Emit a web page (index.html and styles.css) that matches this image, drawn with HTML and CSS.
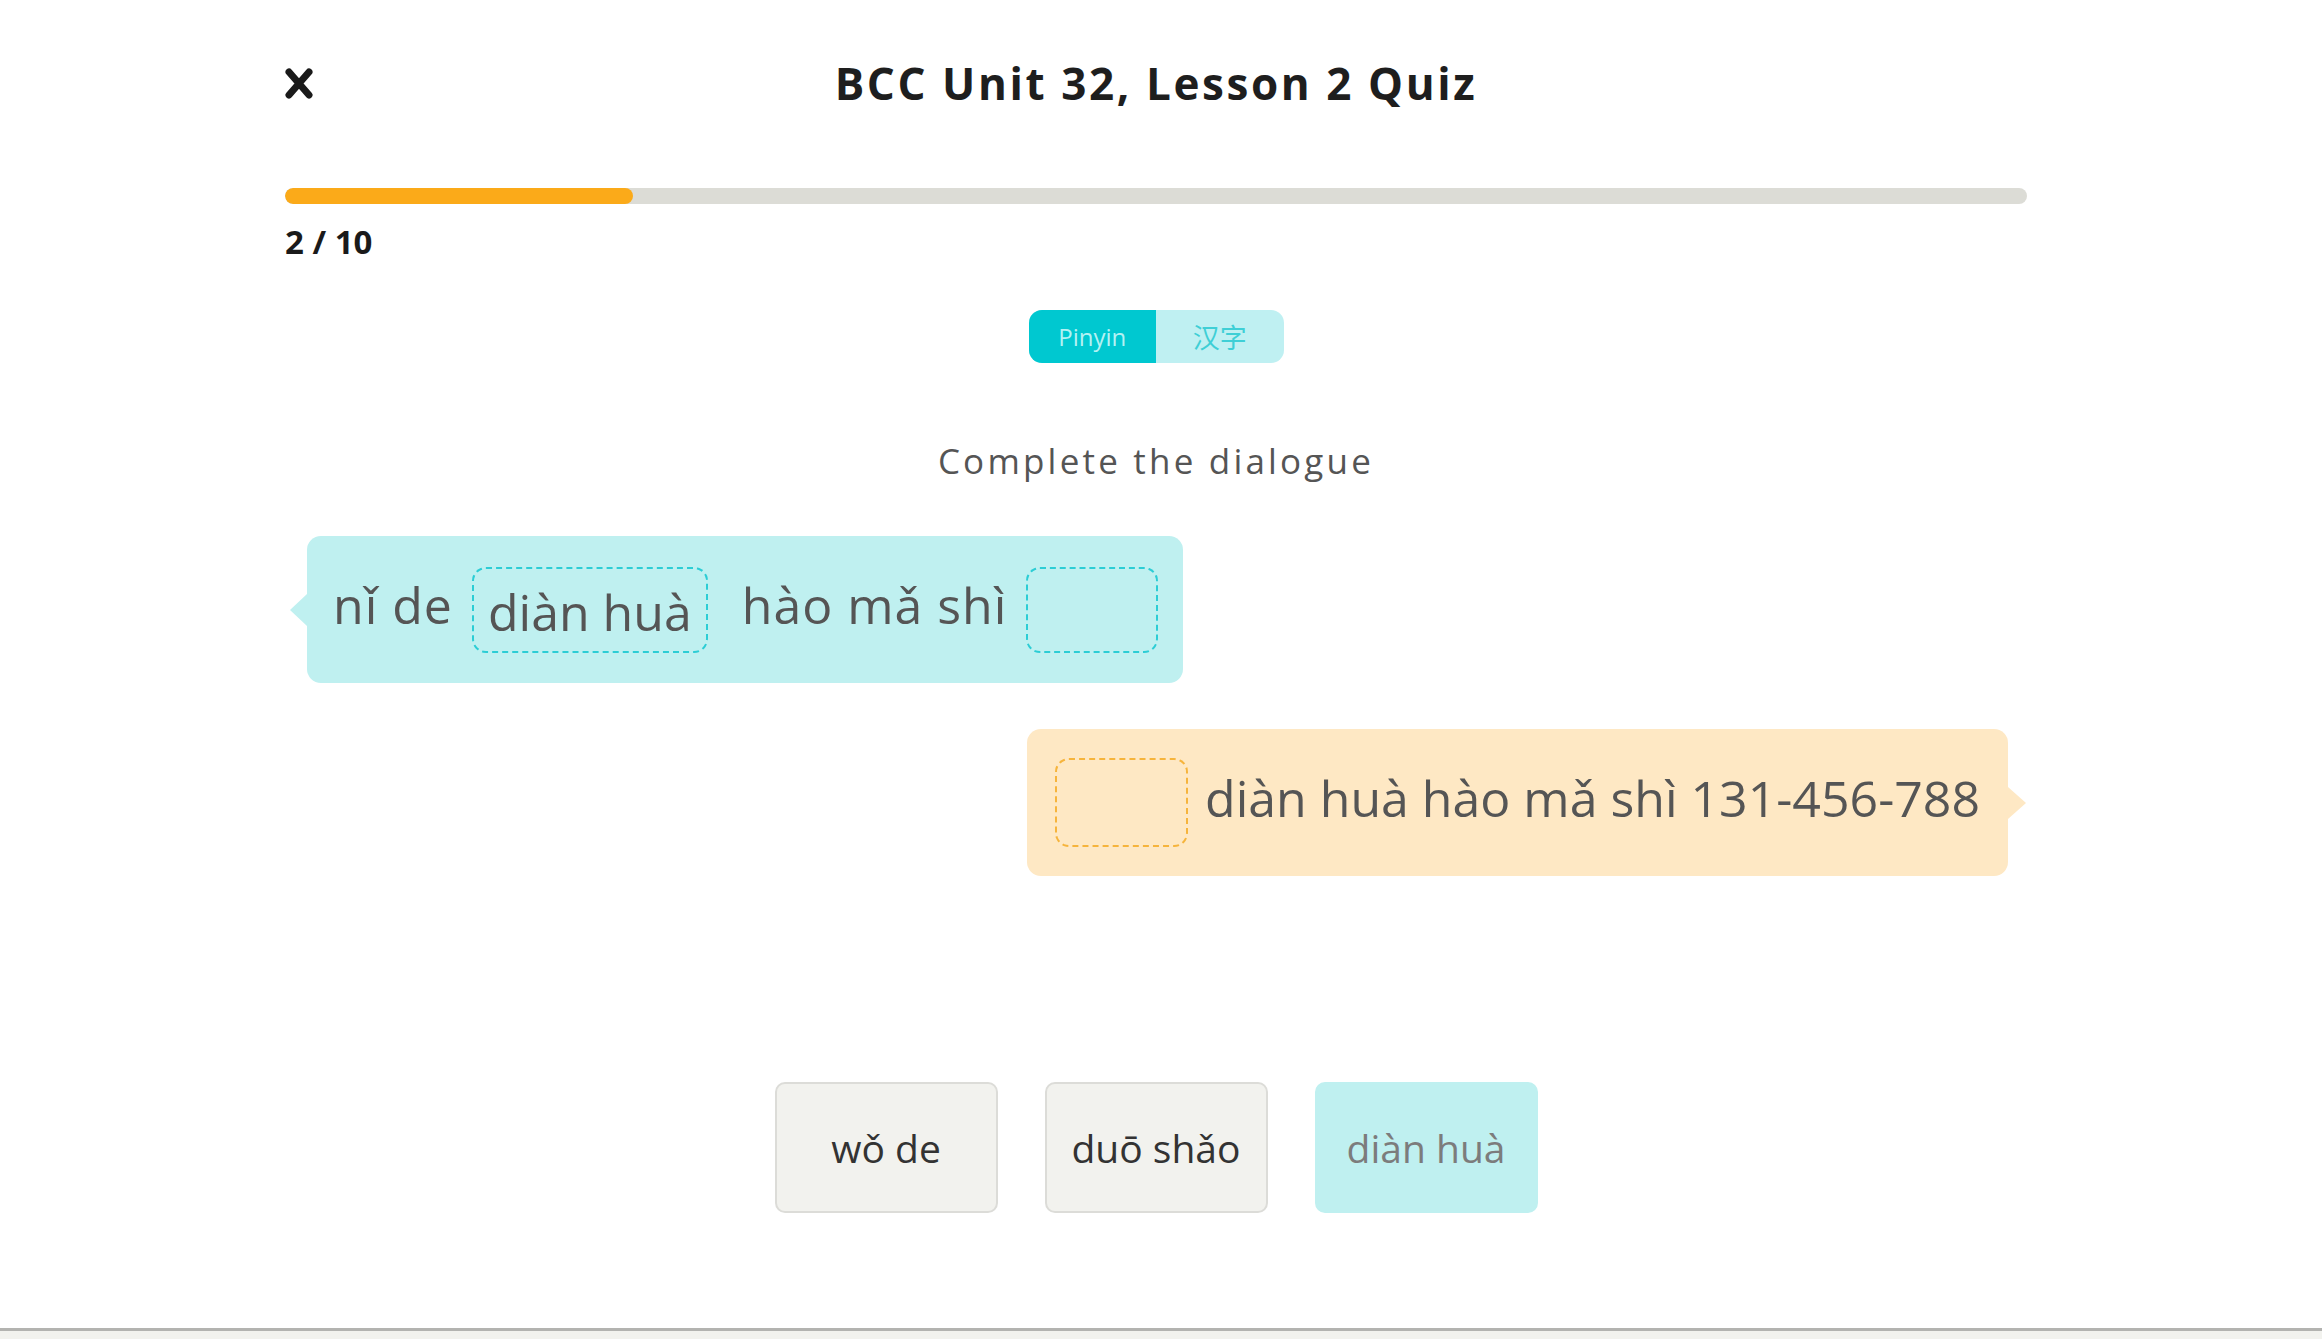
FILE: index.html
```html
<!DOCTYPE html>
<html lang="en">
<head>
    <meta charset="UTF-8">
    <title>BCC Unit 32, Lesson 2 Quiz</title>
    <link rel="stylesheet" href="styles.css">
</head>
<body>
    <div class="page">
        <div class="quiz">

            <div class="quiz-header">
                <a href="#" class="close-btn" aria-label="Close">
                    <svg width="28" height="31" viewBox="0 0 28 31">
                        <path d="M4 4 L24 27 M24 4 L4 27" stroke="#1a1a1a" stroke-width="7" stroke-linecap="round"/>
                    </svg>
                </a>
                <h1>BCC Unit 32, Lesson 2 Quiz</h1>
                <div></div>
            </div>

            <div class="progress">
                <div class="progress-fill" style="width: 20%"></div>
            </div>
            <div class="progress-count">2 / 10</div>

            <div class="script-toggle">
                <button class="toggle-btn active">Pinyin</button>
                <button class="toggle-btn hanzi">汉字</button>
            </div>

            <p class="instructions">Complete the dialogue</p>

            <div class="dialogue">
                <div class="bubble bubble-left">
                    <span class="word">nǐ de</span>
                    <span class="slot slot-filled">diàn huà</span>
                    <span class="word">hào mǎ shì</span>
                    <span class="slot slot-empty"></span>
                </div>
                <div class="bubble bubble-right">
                    <span class="slot slot-empty"></span>
                    <span class="word">diàn huà hào mǎ shì 131-456-788</span>
                </div>
            </div>

            <div class="options">
                <button class="option">wǒ de</button>
                <button class="option">duō shǎo</button>
                <button class="option used">diàn huà</button>
            </div>
        </div>

        <div class="footer"></div>
    </div>
</body>
</html>
```

FILE: styles.css
```css
body {
    margin: 0;
    font-family: "Open Sans", Arial, sans-serif;
    background-color: white;
    color: #222;
}
.page {
    min-height: 100vh;
    display: flex;
    flex-direction: column;
}
.quiz {
    width: 1742px;
    margin-left: 285px;
    padding-top: 40px;
}

/* header */
.quiz-header {
    display: grid;
    grid-template-columns: 1fr auto 1fr;
    align-items: center;
    height: 86px;
}
.close-btn {
    display: flex;
    width: 28px;
    height: 31px;
}
h1 {
    margin: 0;
    font-size: 44px;
    font-weight: 700;
    letter-spacing: 2.6px;
    color: #1e1e1e;
    line-height: 1;
}

/* progress */
.progress {
    margin-top: 62px;
    height: 16px;
    background-color: #dcdcd6;
    border-radius: 8px;
    overflow: hidden;
}
.progress-fill {
    height: 100%;
    background-color: #fbaa19;
    border-radius: 8px;
}
.progress-count {
    margin-top: 18px;
    font-size: 33px;
    line-height: 40px;
    font-weight: 700;
    color: #1a1a1a;
}

/* pinyin / characters switch */
.script-toggle {
    display: flex;
    width: 255px;
    height: 53px;
    margin: 48px auto 0;
    border-radius: 13px;
    overflow: hidden;
    background-color: #bff0f2;
}
.toggle-btn {
    flex: 1;
    border: none;
    background: none;
    font-family: "Open Sans", "Noto Sans CJK SC", sans-serif;
    font-size: 24px;
    color: #3fcfd6;
    padding: 0;
}
.toggle-btn.active {
    background-color: #00c8d0;
    color: #b4f1f3;
}
.toggle-btn.hanzi {
    font-size: 27px;
}

.instructions {
    margin: 74px 0 0;
    text-align: center;
    font-size: 35px;
    line-height: 48px;
    letter-spacing: 3.2px;
    color: #555;
}

/* dialogue bubbles */
.dialogue {
    display: flex;
    flex-direction: column;
    margin-top: 51px;
    gap: 46px;
}
.bubble {
    position: relative;
    display: flex;
    align-items: center;
    height: 147px;
    box-sizing: border-box;
    border-radius: 14px;
    font-size: 50px;
    color: #555;
}
.bubble::before {
    content: "";
    position: absolute;
    top: 50%;
    margin-top: -16px;
    border-top: 16px solid transparent;
    border-bottom: 16px solid transparent;
}
.bubble-left {
    align-self: flex-start;
    margin-left: 22px;
    padding: 0 25px 0 26px;
    background-color: #bff0f0;
}
.bubble-left::before {
    left: -17px;
    border-right: 17px solid #bff0f0;
}
.bubble-left .word {
    letter-spacing: 1px;
}
.bubble-right {
    align-self: flex-end;
    margin-right: 19px;
    padding: 0 28px;
    background-color: #fee8c4;
}
.bubble-right::before {
    right: -18px;
    border-left: 18px solid #fee8c4;
}
.word {
    line-height: 1;
    white-space: nowrap;
    padding-bottom: 10px;
}
.slot {
    display: flex;
    align-items: center;
    justify-content: center;
    height: 86px;
    box-sizing: border-box;
    border: 2px dashed #2ccdd5;
    border-radius: 14px;
    line-height: 1;
    white-space: nowrap;
}
.bubble-left .word + .slot {
    margin-left: 19px;
}
.bubble-left .slot + .word {
    margin-left: 34px;
}
.slot-filled {
    padding: 4px 14px 0;
}
.slot-empty {
    width: 132px;
}
.bubble-right .slot {
    width: 133px;
    height: 89px;
    margin-right: 17px;
    border-color: #f6b43c;
}

/* answer options */
.options {
    display: flex;
    justify-content: center;
    gap: 47px;
    margin-top: 206px;
}
.option {
    width: 223px;
    height: 131px;
    border: 2px solid #dcdcd8;
    border-radius: 10px;
    background-color: #f2f2ee;
    font-family: "Open Sans", Arial, sans-serif;
    font-size: 39px;
    color: #333;
    padding: 0;
}
.option.used {
    background-color: #bff0f0;
    border-color: #bff0f0;
    color: #7c7c7c;
}

.footer {
    margin-top: auto;
    height: 8px;
    border-top: 3px solid #b3b3b0;
    background-color: #f2f2ee;
}
```
